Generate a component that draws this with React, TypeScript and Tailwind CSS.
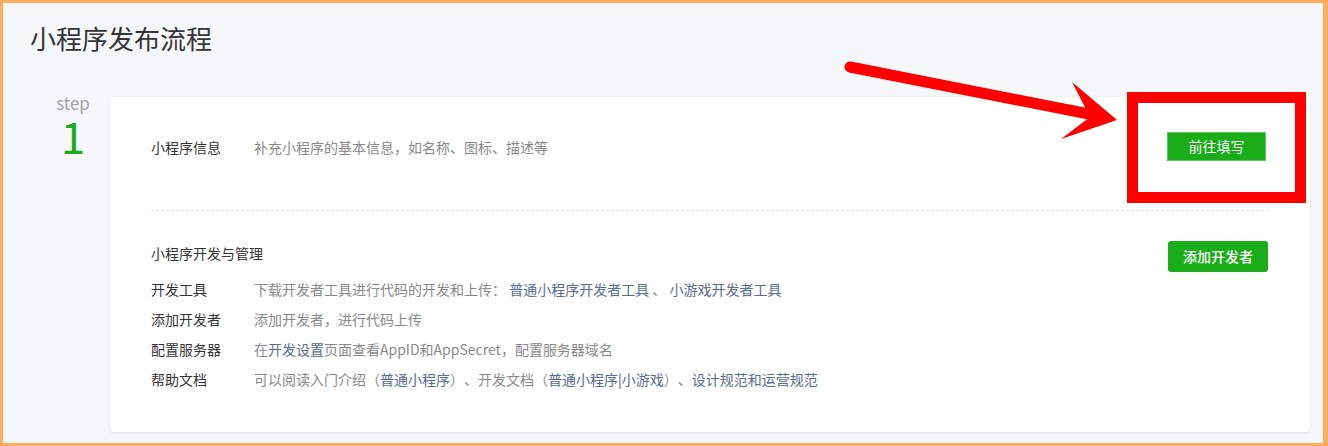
import React from "react";

const font = { fontFamily: '"Noto Sans CJK SC", "Noto Sans", sans-serif' };

function Link({ children }: { children: React.ReactNode }) {
  return <span className="text-[#576b95]">{children}</span>;
}

function Row({ label, children }: { label: string; children: React.ReactNode }) {
  return (
    <div className="flex h-[30px] items-center text-[14px] leading-[30px]">
      <div className="w-[103px] shrink-0 text-[#353535]">{label}</div>
      <div className="text-[#8a8a8a] whitespace-nowrap">{children}</div>
    </div>
  );
}

export default function App() {
  return (
    <div className="relative h-[446px] w-[1328px] overflow-hidden [text-spacing-trim:space-all]" style={font}>
      <div className="h-full w-full border-t-[3px] border-l-[3px] border-b-[3px] border-r-[5px] border-[#ffac5c] bg-[#f6f7f9]">
        <div className="pl-[27px] pt-[17px] text-[26px] leading-[36px] text-[#353535]">小程序发布流程</div>
        <div className="mt-[41px] flex">
          <div className="w-[107px] shrink-0 pl-[50px]">
            <div className="flex w-[40px] flex-col items-center">
              <div className="-mt-[4px] text-[17px] leading-[20px] text-[#a3a3a3]">step</div>
              <div className="mt-[2px] text-[44px] leading-[40px] text-[#1aad19]">1</div>
            </div>
          </div>
          <div className="h-[335px] w-[1200px] rounded-[4px] bg-white px-[41px] shadow-[0_1px_3px_rgba(0,0,0,0.1)]">
            <div className="flex h-[114px] items-start justify-between border-b border-dashed border-[#e3e3e3] pt-[35px]">
              <div className="mt-[5px] flex text-[14px] leading-[20px]">
                <div className="w-[103px] text-[#353535]">小程序信息</div>
                <div className="text-[#8a8a8a]">补充小程序的基本信息，如名称、图标、描述等</div>
              </div>
              <div className="mr-[3px] flex h-[29px] w-[99px] items-center justify-center border border-[#5ec75d] bg-[#1aad19] text-[14px] text-white">
                前往填写
              </div>
            </div>
            <div className="pt-[27px]">
              <div className="flex items-start justify-between">
                <div className="text-[14px] leading-[30px] text-[#353535]">小程序开发与管理</div>
                <div className="mr-[1px] mt-[3px] flex h-[31px] w-[100px] items-center justify-center rounded-[3px] bg-[#1aad19] text-[14px] font-medium text-white">
                  添加开发者
                </div>
              </div>
              <div className="mt-[2px]">
                <Row label="开发工具">
                  下载开发者工具进行代码的开发和上传： <Link>普通小程序开发者工具</Link> 、 <Link>小游戏开发者工具</Link>
                </Row>
                <Row label="添加开发者">添加开发者，进行代码上传</Row>
                <Row label="配置服务器">
                  在<Link>开发设置</Link>页面查看AppID和AppSecret，配置服务器域名
                </Row>
                <Row label="帮助文档">
                  可以阅读入门介绍（<Link>普通小程序</Link>）、开发文档（<Link>普通小程序</Link>
                  <span className="text-[#555]">|</span>
                  <Link>小游戏</Link>）、<Link>设计规范和运营规范</Link>
                </Row>
              </div>
            </div>
          </div>
        </div>
      </div>
      <svg className="pointer-events-none absolute left-0 top-0" width="1328" height="446" viewBox="0 0 1328 446">
        <rect x="1132.5" y="97.5" width="168" height="100" fill="none" stroke="#ff0000" strokeWidth="11" />
        <line x1="850" y1="67" x2="1094" y2="115" stroke="#ff0000" strokeWidth="11" strokeLinecap="round" />
        <polygon points="1072,82 1117,120 1061,139 1090,117" fill="#ff0000" />
      </svg>
    </div>
  );
}
